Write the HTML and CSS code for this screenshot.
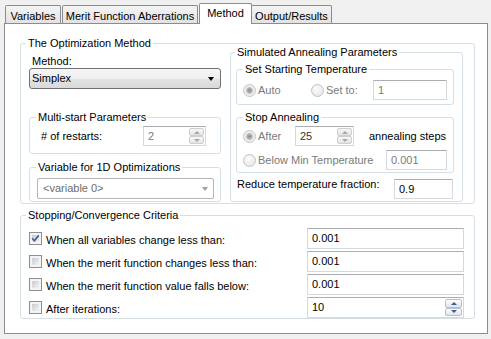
FILE: index.html
```html
<!DOCTYPE html>
<html lang="en">
<head>
    <meta charset="UTF-8">
    <title>Optimization - Method</title>
    <link rel="stylesheet" href="styles.css">
</head>
<body>
    <div class="tabs">
        <div class="tab tab-vars">Variables</div>
        <div class="tab tab-merit">Merit Function Aberrations</div>
        <div class="tab tab-method active">Method</div>
        <div class="tab tab-output">Output/Results</div>
    </div>

    <div class="page">
        <!-- optimization method -->
        <fieldset class="opt">
            <legend>The Optimization Method</legend>
            <div class="opt-body">
                <div class="left-col">
                    <div class="method-label">Method:</div>
                    <div class="combo">
                        <span>Simplex</span>
                        <span class="arrow"></span>
                    </div>

                    <fieldset class="multi">
                        <legend>Multi-start Parameters</legend>
                        <div class="row">
                            <span class="grow"># of restarts:</span>
                            <div class="spin spin-restarts disabled">
                                <span class="val">2</span>
                                <div class="btns"><span class="up"></span><span class="down"></span></div>
                            </div>
                        </div>
                    </fieldset>

                    <fieldset class="var1d">
                        <legend>Variable for 1D Optimizations</legend>
                        <div class="combo disabled">
                            <span>&lt;variable 0&gt;</span>
                            <span class="arrow"></span>
                        </div>
                    </fieldset>
                </div>

                <fieldset class="sa">
                    <legend>Simulated Annealing Parameters</legend>
                    <div class="sa-body">
                        <fieldset class="sst">
                            <legend>Set Starting Temperature</legend>
                            <div class="row">
                                <div class="choice choice-auto"><span class="radio on"></span><span class="dim">Auto</span></div>
                                <div class="choice grow"><span class="radio"></span><span class="dim">Set to:</span></div>
                                <div class="tb tb-start dim">1</div>
                            </div>
                        </fieldset>

                        <fieldset class="stop-ann">
                            <legend>Stop Annealing</legend>
                            <div class="row">
                                <div class="choice choice-after"><span class="radio on"></span><span class="dim">After</span></div>
                                <div class="spin spin-steps">
                                    <span class="val">25</span>
                                    <div class="btns"><span class="up"></span><span class="down"></span></div>
                                </div>
                                <span class="steps">annealing steps</span>
                            </div>
                            <div class="row row-min">
                                <div class="choice grow"><span class="radio"></span><span class="dim">Below Min Temperature</span></div>
                                <div class="tb tb-min dim">0.001</div>
                            </div>
                        </fieldset>

                        <div class="reduce">
                            <span class="reduce-label">Reduce temperature fraction:</span>
                            <div class="tb">0.9</div>
                        </div>
                    </div>
                </fieldset>
            </div>
        </fieldset>

        <!-- stopping criteria -->
        <fieldset class="stop">
            <legend>Stopping/Convergence Criteria</legend>
            <div class="crit">
                <span class="check on"><svg viewBox="0 0 13 13" width="13" height="13"><path d="M3.2 6.3 L5.4 8.8 L9.8 3.4" fill="none" stroke="#4a5d96" stroke-width="1.7"/></svg></span>
                <span class="crit-label">When all variables change less than:</span>
                <div class="tb tb-crit">0.001</div>
            </div>
            <div class="crit">
                <span class="check"></span>
                <span class="crit-label">When the merit function changes less than:</span>
                <div class="tb tb-crit">0.001</div>
            </div>
            <div class="crit">
                <span class="check"></span>
                <span class="crit-label">When the merit function value falls below:</span>
                <div class="tb tb-crit">0.001</div>
            </div>
            <div class="crit">
                <span class="check"></span>
                <span class="crit-label">After iterations:</span>
                <div class="spin spin-iter">
                    <span class="val">10</span>
                    <div class="btns"><span class="up"></span><span class="down"></span></div>
                </div>
            </div>
        </fieldset>
    </div>
</body>
</html>
```

FILE: styles.css
```css
* {
    box-sizing: border-box;
}

body {
    margin: 0;
    width: 491px;
    height: 339px;
    overflow: hidden;
    background: #f0f0f0;
    font-family: "Liberation Sans", Arial, sans-serif;
    font-size: 11px;
    line-height: 13px;
    color: #000;
}

/* tab strip */
.tabs {
    display: flex;
    align-items: flex-end;
    height: 23px;
    padding-left: 5px;
}

.tab {
    height: 18px;
    padding-top: 4px;
    border: 1px solid #898c95;
    border-bottom: none;
    border-radius: 2px 2px 0 0;
    background: linear-gradient(#f4f4f4, #e2e2e2);
    text-align: center;
    white-space: nowrap;
}

.tab-vars { width: 56px; }
.tab-merit { width: 136px; margin-left: 1px; }
.tab-method { width: 53px; margin-left: 1px; }
.tab-output { width: 81px; margin-left: -1px; }

.tab.active {
    position: relative;
    z-index: 1;
    height: 21px;
    padding-top: 3px;
    margin-bottom: -1px;
    background: #fff;
}

.page {
    margin-left: 4px;
    width: 484px;
    height: 311px;
    border: 1px solid #898c95;
    background: #fff;
    padding: 13px 12px 0 15px;
}

/* group boxes */
fieldset {
    margin: 0;
    min-width: 0;
    padding: 0;
    border: 1px solid #d5dfe5;
    border-radius: 3px;
}

legend {
    padding: 0 2px;
    line-height: 13px;
}

.opt {
    padding: 0 11px 1px 8px;
}

.opt > legend { margin-left: -3px; }

.opt-body {
    display: flex;
    gap: 9px;
}

.left-col {
    width: 192px;
    flex: none;
    padding-top: 5px;
}

.method-label {
    padding-left: 3px;
}

.row {
    display: flex;
    align-items: center;
}

.grow {
    flex: 1;
    min-width: 0;
}

.multi {
    margin-top: 22px;
    padding: 2px 14px 7px 11px;
}

.multi > legend { margin-left: -5px; }

.var1d {
    margin-top: 7px;
    padding: 4px 6px 2px 7px;
}

.var1d > legend { margin-left: -1px; }

.sa {
    width: 233px;
    flex: none;
    margin-top: -4px;
    padding: 0 8px 1px 5px;
}

.sa > legend { margin-left: -1px; }

.sa-body {
    display: grid;
    grid-template-columns: 218px;
}

.sst {
    margin-top: 4px;
    padding: 4px 6px 4px 6px;
}

.stop-ann {
    margin-top: 6px;
    padding: 2px 6px 2px 6px;
}

.row-min {
    margin-top: 4px;
}

.reduce {
    display: grid;
    grid-template-columns: 158px 59px;
    margin-top: 6px;
}

.reduce-label {
    padding: 0 0 0 1px;
    margin-top: -1px;
}

.stop {
    margin-top: 5px;
    padding: 6px 10px 0 8px;
}

.stop > legend { margin-left: -3px; }

/* controls */
.combo {
    display: flex;
    align-items: center;
    justify-content: space-between;
    height: 21px;
    padding: 0 6px 0 2px;
    border: 1px solid #707070;
    border-radius: 3px;
    background: linear-gradient(#f6f6f6 0%, #eeeeee 50%, #e3e3e3 51%, #d9d9d9 100%);
}

.combo .arrow {
    width: 0;
    height: 0;
    border-left: 3.5px solid transparent;
    border-right: 3.5px solid transparent;
    border-top: 4px solid #000;
}

.combo.disabled {
    padding: 0 5px 0 5px;
    border-color: #b5b5b5;
    border-radius: 2px;
    background: #fff;
    color: #6d6d6d;
}

.combo.disabled .arrow {
    border-top-color: #a0a0a0;
}

.tb {
    display: flex;
    align-items: center;
    flex: none;
    height: 20px;
    padding-left: 4px;
    border: 1px solid #d5d9de;
    border-top-color: #abadb3;
    background: #fff;
}

.tb-start { width: 74px; }
.tb-min { width: 61px; }
.tb-crit { width: 157px; height: 21px; margin-left: auto; }

.dim {
    color: #7a7a7a;
}

.spin {
    display: flex;
    align-items: stretch;
    flex: none;
    height: 20px;
    border: 1px solid #d5d9de;
    border-top-color: #abadb3;
    background: #fff;
}

.spin .val {
    flex: 1;
    display: flex;
    align-items: center;
    padding-left: 4px;
}

.spin .btns {
    display: flex;
    flex-direction: column;
    width: 15px;
    margin: 1px;
}

.spin .btns span {
    flex: 1;
    display: flex;
    align-items: center;
    justify-content: center;
    border: 1px solid #cfcfcf;
    border-radius: 2px;
    background: linear-gradient(#f7f7f7, #e4e4e4);
}

.spin .up::after,
.spin .down::after {
    content: '';
    width: 0;
    height: 0;
    border-left: 3px solid transparent;
    border-right: 3px solid transparent;
}

.spin .up::after { border-bottom: 3px solid #a7a7a7; }
.spin .down::after { border-top: 3px solid #a7a7a7; }

.spin.disabled .val { color: #7a7a7a; }

.spin-restarts { width: 63px; }
.spin-steps { width: 59px; }
.spin-steps .val { color: #333; }
.spin-iter { width: 157px; height: 21px; margin-left: auto; }

.spin-iter .btns { width: 17px; }

.spin-iter .btns span {
    border-color: #b4c0cf;
    background: linear-gradient(#fdfdfd, #dfe5ee);
}

.spin-iter .up::after { border-bottom-color: #3d5a98; }
.spin-iter .down::after { border-top-color: #3d5a98; }

.steps {
    margin-left: 15px;
    white-space: nowrap;
}

.choice {
    display: flex;
    align-items: center;
    gap: 2px;
    white-space: nowrap;
}

.choice-auto { width: 68px; flex: none; }
.choice-after { width: 52px; flex: none; }

.radio {
    flex: none;
    width: 13px;
    height: 13px;
    border-radius: 50%;
    border: 1px solid #c2c2c2;
    background: radial-gradient(circle at 40% 35%, #fbfbfb, #e3e3e3);
}

.radio.on {
    background: radial-gradient(circle, #8f8f8f 0, #a8a8a8 2px, #cfcfcf 3.2px, #ececec 4.2px, #f4f4f4 6px);
}

.crit {
    display: flex;
    align-items: center;
    height: 21px;
    margin-bottom: 2px;
}

.crit:last-child {
    margin-bottom: 0;
}

.check {
    flex: none;
    width: 13px;
    height: 13px;
    padding: 2px;
    border: 1px solid #8e8f8f;
    background: linear-gradient(135deg, #c8ccd1, #f3f3f3) content-box, #f4f4f4;
    position: relative;
}

.check svg {
    position: absolute;
    top: -1px;
    left: -1px;
}

.crit-label {
    margin-left: 4px;
    padding-top: 3px;
}
```
